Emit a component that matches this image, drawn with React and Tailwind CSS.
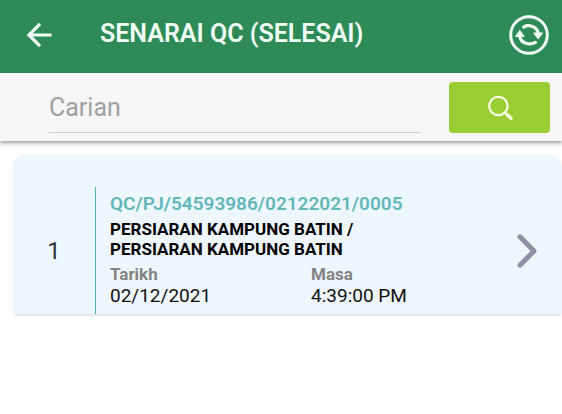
import { useState } from "react";

const records = [
  {
    id: 1,
    code: "QC/PJ/54593986/02122021/0005",
    from: "PERSIARAN KAMPUNG BATIN",
    to: "PERSIARAN KAMPUNG BATIN",
    date: "02/12/2021",
    time: "4:39:00 PM",
  },
];

function BackIcon() {
  return (
    <svg viewBox="0 0 26 26" className="h-[26px] w-[26px]" fill="none" stroke="currentColor" strokeWidth="3.2">
      <path d="M25.6 13H3M14 1.9 2.9 13 14 24.1" />
    </svg>
  );
}

function RefreshIcon() {
  return (
    <svg viewBox="0 0 40 40" className="h-10 w-10" fill="none" stroke="currentColor">
      <circle cx="20" cy="20" r="18.3" strokeWidth="3" />
      <path d="M14.6 12C19.5 9.3 28.4 11 29.2 18.5" strokeWidth="3.2" strokeLinecap="round" />
      <path d="M26.4 27.4C21.5 30.4 11.6 29 10.8 21" strokeWidth="3.2" strokeLinecap="round" />
      <path d="M25 18.2h8.2L29.2 23.6Z" fill="currentColor" strokeWidth="1.2" strokeLinejoin="round" />
      <path d="M6.8 21.4H15L10.8 15.8Z" fill="currentColor" strokeWidth="1.2" strokeLinejoin="round" />
    </svg>
  );
}

function SearchIcon() {
  return (
    <svg viewBox="0 0 26 26" className="h-[26px] w-[26px]" fill="none" stroke="currentColor" strokeLinecap="round">
      <circle cx="11.4" cy="11" r="9.2" strokeWidth="2.2" />
      <path d="m18 17.6 1.4 1.4" strokeWidth="2.4" />
      <path d="m19.8 19.4 4.2 3.8" strokeWidth="3.4" />
    </svg>
  );
}

function ChevronIcon() {
  return (
    <svg viewBox="0 0 20 34" className="h-[34px] w-5" fill="none" stroke="currentColor" strokeWidth="5">
      <path d="M3 2.8 17 17 3 31.2" strokeLinecap="round" strokeLinejoin="round" />
    </svg>
  );
}

function RecordCard({ record }) {
  return (
    <li className="flex rounded-t-xl bg-[#eef7ff] pt-8 shadow-[0_2px_3px_-1px_rgba(0,0,0,0.18)]">
      <div className="grid w-[82px] shrink-0 place-items-center text-2xl text-[#333]">{record.id}</div>
      <div className="min-w-0 flex-1 border-l border-[#4fb3b8] pt-[5px] pb-2 pl-[14px]">
        <p className="text-[19px] leading-6 font-semibold text-[#62b8b8]">{record.code}</p>
        <p className="pt-[3px] text-[17px] leading-5 font-bold text-black">
          {record.from} /<br />
          {record.to}
        </p>
        <dl className="grid grid-cols-2 pt-[3px]">
          <div>
            <dt className="text-[17px] leading-6 font-bold text-[#838383]">Tarikh</dt>
            <dd className="text-[19px] leading-5 text-[#111]">{record.date}</dd>
          </div>
          <div>
            <dt className="text-[17px] leading-6 font-bold text-[#838383]">Masa</dt>
            <dd className="text-[19px] leading-5 text-[#111]">{record.time}</dd>
          </div>
        </dl>
      </div>
      <button type="button" aria-label="Buka rekod" className="shrink-0 pr-[25px] pl-[5px] text-[#9190a4]">
        <ChevronIcon />
      </button>
    </li>
  );
}

export default function App() {
  const [query, setQuery] = useState("");
  const visible = records.filter((r) => r.code.includes(query.trim().toUpperCase()));

  return (
    <div className="min-h-screen bg-white font-[Roboto,sans-serif]">
      <header className="flex items-center bg-[#2e8b57] pt-[15px] pr-[13px] pb-[18px] pl-[26px] text-[#f0fff5]">
        <button type="button" aria-label="Kembali" className="shrink-0">
          <BackIcon />
        </button>
        <h1 className="min-w-0 flex-1 pb-0.5 pl-12 text-[25px] leading-8 font-semibold">SENARAI QC (SELESAI)</h1>
        <button type="button" aria-label="Muat semula" className="shrink-0">
          <RefreshIcon />
        </button>
      </header>

      <form
        onSubmit={(e) => e.preventDefault()}
        className="flex items-center bg-[#f6f6f6] pt-[9px] pr-3 pb-2 pl-[49px] shadow-[0_2px_4px_rgba(0,0,0,0.4)]"
      >
        <input
          type="text"
          aria-label="Carian"
          placeholder="Carian"
          value={query}
          onChange={(e) => setQuery(e.target.value)}
          className="mr-7 h-[50px] min-w-0 flex-1 border-b border-[#cfcfcf] text-[25px] text-[#333] outline-none placeholder:text-[#a0a0a0]"
        />
        <button
          type="submit"
          aria-label="Cari"
          className="grid h-[51px] w-[101px] shrink-0 place-items-center rounded bg-[#9acd32] text-[#fbffe8]"
        >
          <SearchIcon />
        </button>
      </form>

      <ul className="pt-[14px] pl-[13px]">
        {visible.map((record) => (
          <RecordCard key={record.id} record={record} />
        ))}
      </ul>
    </div>
  );
}
